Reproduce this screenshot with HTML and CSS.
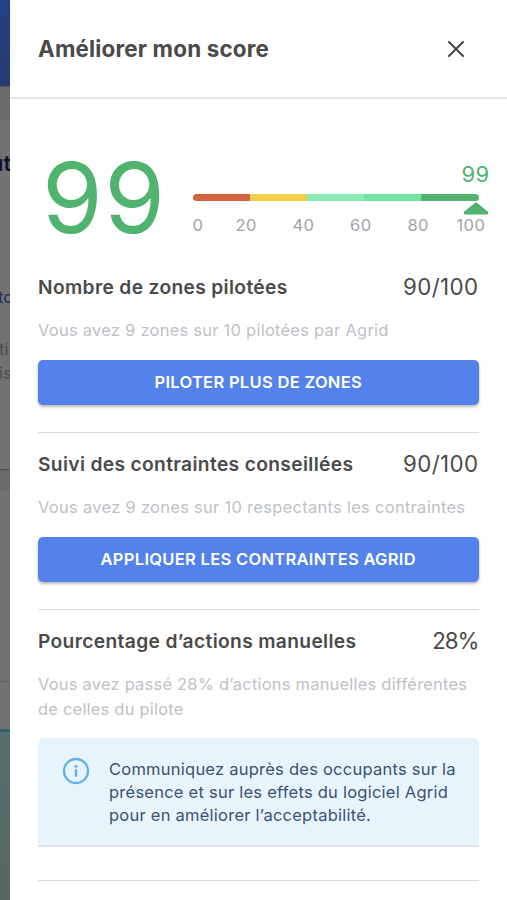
FILE: index.html
```html
<!DOCTYPE html>
<html lang="fr">
<head>
<meta charset="utf-8">
<title>Améliorer mon score</title>
<link rel="stylesheet" href="styles.css">
</head>
<body>
<div class="backdrop" aria-hidden="true">
  <div class="topbar"></div>
  <div class="toolbar"></div>
  <div class="page"><span class="frag frag-bold">ut</span><span class="frag frag-link">to</span><span class="frag frag-a">ti</span><span class="frag frag-b">is</span></div>
  <div class="gap"></div>
  <div class="chart"></div>
  <div class="area"></div>
</div>
<main class="drawer">
  <header class="head">
    <h1>Améliorer mon score</h1>
    <svg class="close" viewBox="0 0 18 18" width="18" height="18"><path d="M2 2L16 16M16 2L2 16"/></svg>
  </header>
  <section class="score">
    <div class="big">99</div>
    <div class="gauge">
      <div class="value">99</div>
      <div class="bar"><i class="c1"></i><i class="c2"></i><i class="c3"></i><i class="c4"></i><i class="c5"></i></div>
      <svg class="marker" viewBox="0 0 26 13" width="26" height="13"><path d="M11.6 1.2Q13 0 14.4 1.2L24.8 9.6Q26.2 12.3 24 12.4H2Q-.2 12.3 1.2 9.6Z"/></svg>
      <div class="ticks"><span>0</span><span>20</span><span>40</span><span>60</span><span>80</span><span>100</span></div>
    </div>
  </section>
  <section class="item">
    <div class="row"><h2>Nombre de zones pilotées</h2><span class="num">90/100</span></div>
    <p class="sub">Vous avez 9 zones sur 10 pilotées par Agrid</p>
    <button class="btn">PILOTER PLUS DE ZONES</button>
  </section>
  <section class="item">
    <div class="row"><h2>Suivi des contraintes conseillées</h2><span class="num">90/100</span></div>
    <p class="sub wide">Vous avez 9 zones sur 10 respectants les contraintes</p>
    <button class="btn">APPLIQUER LES CONTRAINTES AGRID</button>
  </section>
  <section class="item last">
    <div class="row"><h2>Pourcentage d’actions manuelles</h2><span class="num percent">28%</span></div>
    <p class="sub tight">Vous avez passé 28% d’actions manuelles différentes<br>de celles du pilote</p>
    <div class="info">
      <svg viewBox="0 0 28 28" width="28" height="28"><circle class="ring" cx="14" cy="14" r="12"/><circle class="dot" cx="14" cy="9.2" r="1.5"/><path class="stem" d="M14 13.2V18.8"/></svg>
      <p>Communiquez auprès des occupants sur la<br>présence et sur les effets du logiciel Agrid<br>pour en améliorer l’acceptabilité.</p>
    </div>
  </section>
</main>
</body>
</html>
```
FILE: styles.css
```css
* { box-sizing: border-box; margin: 0; padding: 0; }
body {
  width: 507px; height: 900px; overflow: hidden; display: flex;
  background: #fff; color: #4a4a4b; font-family: Inter, "Liberation Sans", sans-serif;
}
.backdrop {
  flex: 0 0 9.5px; height: 900px; overflow: hidden; background: #727272;
  display: flex; flex-direction: column;
}
.topbar { flex: 0 0 87px; background: linear-gradient(#263f86, #273b70); border-bottom: 1px solid #555; }
.toolbar { flex: 0 0 34px; background: #6b6b6d; border-bottom: 1px solid #707070; }
.page { position: relative; flex: 0 0 349px; border-bottom: 1px solid #4d4d4d; }
.frag { position: absolute; left: -1px; font-size: 16.5px; line-height: 20px; color: #484b53; }
.frag-bold { top: 32px; left: -10px; font-size: 22px; font-weight: 600; color: #0e1030; }
.frag-link { top: 166px; left: -2px; color: #25285a; }
.frag-a { top: 218px; }
.frag-b { top: 242px; }
.gap { flex: 0 0 21px; background: #696a6b; }
.chart { flex: 0 0 241px; border-bottom: 3px solid #315f6b; background: linear-gradient(#606060, #606060) 0 190px / 100% 1px no-repeat; }
.area { flex: 1; background: linear-gradient(#566e6b, #566763); }
.drawer { flex: 0 0 497.5px; min-width: 0; background: #fff; }
.head {
  height: 99px; padding: 0 42.5px 0 28.5px; border-bottom: 2px solid #e6e6e7;
  display: flex; align-items: center; justify-content: space-between;
}
h1 { font-size: 22.4px; font-weight: 650; line-height: 28px; letter-spacing: .19px; }
.close { fill: none; stroke: #454545; stroke-width: 2; stroke-linecap: round; }
.score { display: flex; height: 174px; padding: 55px 0 0 34px; }
.big { flex: none; width: 149px; margin-left: -1.5px; margin-right: 1.5px; font-size: 98px; line-height: 88px; letter-spacing: 1.4px; color: #50b470; white-space: nowrap; }
.gauge { flex: none; width: 286px; display: flex; flex-direction: column; }
.value { align-self: flex-end; margin-right: -11px; padding-top: 6px; font-size: 22px; line-height: 28px; letter-spacing: .3px; color: #50b470; }
.bar { display: flex; height: 7px; margin-top: 6px; border-radius: 4px; overflow: hidden; }
.bar i { flex: 1; }
.c1 { background: #d46342; } .c2 { background: #f2ce4b; } .c3 { background: #8cebb5; }
.c4 { background: #73e4a1; } .c5 { background: #50b470; }
.marker { align-self: flex-end; margin: 1px -10px 0 0; fill: #50b470; }
.ticks {
  display: grid; grid-template-columns: 43px 57px 57.5px 57.5px 49px 30px;
  font-size: 16.5px; line-height: 20px; letter-spacing: .4px; color: #a2a3a7;
}
.item { height: 160px; margin: 0 28.5px 17px; border-bottom: 1px solid #d9d9db; }
.row { display: flex; justify-content: space-between; align-items: center; height: 28px; }
h2 { font-size: 19.2px; font-weight: 630; letter-spacing: .35px; white-space: nowrap; }
.num { position: relative; top: -1px; font-size: 22.3px; letter-spacing: .4px; white-space: nowrap; }
.percent { letter-spacing: -1px; }
.sub { margin-top: 17px; font-size: 16.5px; line-height: 24.5px; letter-spacing: .24px; color: #bec1c6; white-space: nowrap; }
.wide { letter-spacing: .28px; }
.tight { letter-spacing: .2px; }
.btn {
  display: block; width: 100%; height: 45px; margin-top: 17px; border: 0; border-radius: 5px;
  background: #5382eb; color: #fff; font: 600 16.5px/45px Inter, "Liberation Sans", sans-serif;
  letter-spacing: .3px; box-shadow: 0 2px 3px rgba(0,0,0,.28);
}
.last { height: 254px; }
.info {
  display: flex; height: 109px; margin-top: 17px; padding: 19px 24px; gap: 19px;
  background: #e8f4fc; border-bottom: 2px solid #dbe2e9; border-radius: 5px 5px 0 0; color: #3b5270;
}
.info svg { flex: none; }
.info p { padding-top: 1px; font-size: 16.5px; line-height: 23.2px; letter-spacing: .24px; white-space: nowrap; }
.ring { fill: none; stroke: #5eb0e9; stroke-width: 2.3; }
.dot { fill: #5eb0e9; }
.stem { stroke: #5eb0e9; stroke-width: 2.4; stroke-linecap: round; }
```
